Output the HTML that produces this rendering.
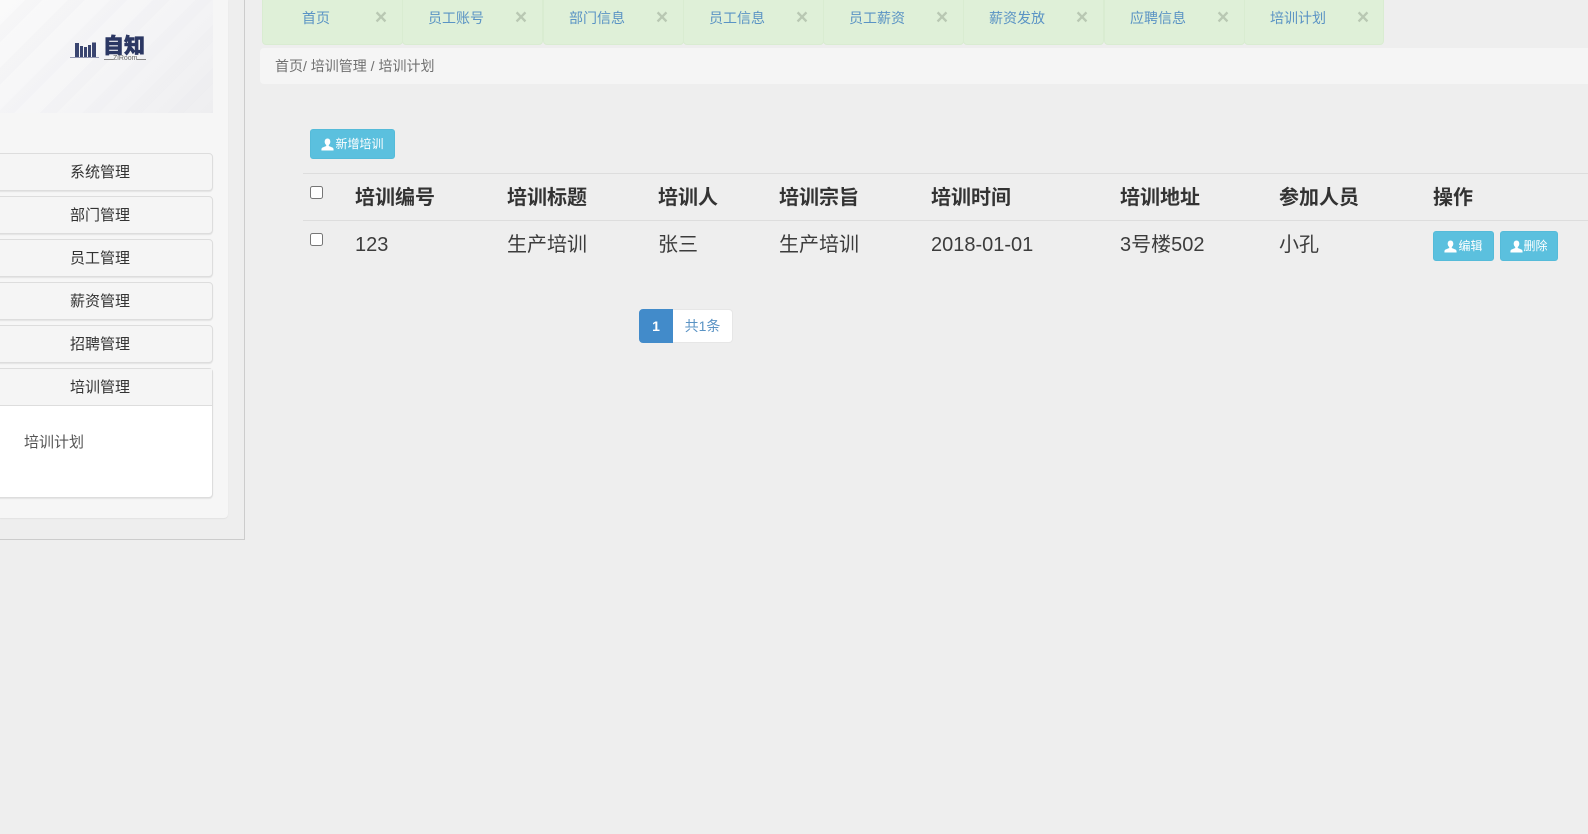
<!DOCTYPE html>
<html lang="zh">
<head>
<meta charset="utf-8">
<title>培训计划</title>
<style>
*{box-sizing:border-box}
html,body{margin:0;padding:0;width:1588px;height:834px;overflow:hidden;background:#eee;color:#333;font-family:"Liberation Sans","Noto Sans CJK SC",sans-serif;font-size:14px}
.a{position:absolute}
#outer{left:0;top:0;width:245px;height:540px;border-right:1px solid #ccc;border-bottom:1px solid #ccc}
#panel{left:0;top:0;width:228px;height:518px;background:#f6f6f6;border-bottom-right-radius:4px;box-shadow:0 1px 1px rgba(0,0,0,.05)}
#logoimg{left:0;top:0;width:213px;height:113px;background:repeating-linear-gradient(135deg,rgba(228,228,234,0) 0,rgba(228,228,234,0) 18px,rgba(228,228,234,.16) 18px,rgba(228,228,234,.16) 30px),linear-gradient(135deg,#fafafa 0%,#f4f4f6 60%,#eeeef0 100%)}
.m{left:-5px;width:218px;height:38px;background:#f5f5f5;border:1px solid #ddd;border-radius:4px;box-shadow:0 1px 1px rgba(0,0,0,.08);text-align:center;font-size:15px;line-height:37px;padding-right:8px}
.tab{top:-6px;width:141px;height:51px;background:#dff0d8;border:1px solid #d9ecd1;border-radius:4px}
.tab span{position:absolute;left:-.5px;width:107px;top:5px;text-align:center;color:#5a93c4;line-height:36px;white-space:nowrap}
.tab b{position:absolute;left:108px;top:6px;width:20px;text-align:center;font-size:21px;line-height:34px;color:#b9c8b3;font-weight:bold;font-family:"Liberation Sans",sans-serif}
#crumb{left:260px;top:48px;width:1328px;height:36px;background:#f5f5f5;border-radius:4px 0 0 4px;padding-left:15px;line-height:37px;color:#707070;white-space:nowrap}
.btn{background:#5bc0de;border:1px solid #55bbd9;border-radius:3px;color:#fff;font-size:12px;height:30px;line-height:28px;white-space:nowrap;display:flex;align-items:center;justify-content:center}
.btn svg{width:13px;height:13px;margin-right:1px;flex:none}
.line{left:303px;width:1285px;height:1px;background:#ddd}
.th,.td{white-space:nowrap;font-size:20px;line-height:30px;color:#333}
.th{top:183px;font-weight:bold}
.td{top:230px;color:#3c3c3c}
.cb{width:13px;height:13px;left:310px;background:#fff;border:1px solid #767676;border-radius:2.5px}
</style>
</head>
<body>
<div class="a" id="outer"></div>
<div class="a" id="panel"></div>
<div class="a" id="logoimg">
<svg class="a" style="left:70px;top:40px" width="30" height="18" viewBox="0 0 30 18">
<path d="M0 17.300H29" stroke="#59618a" stroke-width="0.6" fill="none"/>
<path d="M5 3h4v14H5zM10 6h3v11h-3zM14 7h3v10h-3zM18 5h3v12h-3zM22 2.500h4V17h-4z" fill="#3a4570"/>
</svg>
<div class="a" style="left:103px;top:35px;font-size:21px;line-height:24px;font-weight:900;color:#2b3763;white-space:nowrap;-webkit-text-stroke:.6px #2b3763">自知</div>
<div class="a" style="left:104px;top:59px;width:9px;height:1px;background:#888"></div>
<div class="a" style="left:137px;top:59px;width:9px;height:1px;background:#888"></div>
<div class="a" style="left:113px;top:55px;width:24px;text-align:center;font-size:7px;line-height:8px;color:#666">ZiRoom</div>
</div>
<div class="a m" style="top:153px">系统管理</div>
<div class="a m" style="top:196px">部门管理</div>
<div class="a m" style="top:239px">员工管理</div>
<div class="a m" style="top:282px">薪资管理</div>
<div class="a m" style="top:325px">招聘管理</div>
<div class="a m" style="top:368px;height:130px;background:#fff;padding:0">
<div style="height:37px;background:#f5f5f5;border-bottom:1px solid #ddd;padding-right:8px;line-height:37px">培训管理</div>
<div class="a" style="left:28px;top:59px;line-height:30px;font-size:15px;color:#555">培训计划</div>
</div>

<div class="a tab" style="left:262px"><span>首页</span><b>×</b></div>
<div class="a tab" style="left:402px"><span>员工账号</span><b>×</b></div>
<div class="a tab" style="left:543px"><span>部门信息</span><b>×</b></div>
<div class="a tab" style="left:683px"><span>员工信息</span><b>×</b></div>
<div class="a tab" style="left:823px"><span>员工薪资</span><b>×</b></div>
<div class="a tab" style="left:963px"><span>薪资发放</span><b>×</b></div>
<div class="a tab" style="left:1104px"><span>应聘信息</span><b>×</b></div>
<div class="a tab" style="left:1244px;width:140px"><span>培训计划</span><b>×</b></div>

<div class="a" id="crumb">首页/ 培训管理 / 培训计划</div>

<div class="a btn" style="left:310px;top:129px;width:85px">
<svg viewBox="0 0 12 12"><path d="M6 .5C4.400.5 3.400 1.800 3.400 3.500c0 1.300.6 2.400 1.400 3v.9L1.500 8.800C.8 9.100.4 9.700.4 10.500v1h11.200v-1c0-.8-.4-1.400-1.100-1.700L7.200 7.400v-.9c.8-.6 1.400-1.700 1.400-3C8.600 1.800 7.600.5 6 .5z" fill="#fff"/></svg>新增培训</div>

<div class="a line" style="top:173px"></div>
<div class="a line" style="top:220px"></div>
<div class="a cb" style="top:186px"></div>
<div class="a cb" style="top:233px"></div>

<div class="a th" style="left:355px">培训编号</div>
<div class="a th" style="left:507px">培训标题</div>
<div class="a th" style="left:658px">培训人</div>
<div class="a th" style="left:779px">培训宗旨</div>
<div class="a th" style="left:931px">培训时间</div>
<div class="a th" style="left:1120px">培训地址</div>
<div class="a th" style="left:1279px">参加人员</div>
<div class="a th" style="left:1433px">操作</div>

<div class="a td" style="left:355px">123</div>
<div class="a td" style="left:507px">生产培训</div>
<div class="a td" style="left:658px">张三</div>
<div class="a td" style="left:779px">生产培训</div>
<div class="a td" style="left:931px">2018-01-01</div>
<div class="a td" style="left:1120px">3号楼502</div>
<div class="a td" style="left:1279px">小孔</div>

<div class="a btn" style="left:1433px;top:231px;width:61px">
<svg viewBox="0 0 12 12"><path d="M6 .5C4.400.5 3.400 1.800 3.400 3.500c0 1.300.6 2.400 1.400 3v.9L1.500 8.800C.8 9.100.4 9.700.4 10.500v1h11.200v-1c0-.8-.4-1.400-1.100-1.700L7.200 7.400v-.9c.8-.6 1.400-1.700 1.400-3C8.600 1.800 7.600.5 6 .5z" fill="#fff"/></svg>编辑</div>
<div class="a btn" style="left:1500px;top:231px;width:58px">
<svg style="margin-right:0" viewBox="0 0 12 12"><path d="M6 .5C4.400.5 3.400 1.800 3.400 3.500c0 1.300.6 2.400 1.400 3v.9L1.500 8.800C.8 9.100.4 9.700.4 10.500v1h11.200v-1c0-.8-.4-1.400-1.100-1.700L7.200 7.400v-.9c.8-.6 1.400-1.700 1.400-3C8.600 1.800 7.600.5 6 .5z" fill="#fff"/></svg>删除</div>

<div class="a" style="left:639px;top:309px;width:34px;height:34px;background:#428bca;border:1px solid #428bca;border-radius:4px 0 0 4px;color:#fff;font-weight:bold;text-align:center;line-height:32px">1</div>
<div class="a" style="left:673px;top:309px;width:60px;height:34px;background:#fff;border:1px solid #e6e6e6;border-left:0;border-radius:0 4px 4px 0;color:#5a93c4;text-align:center;line-height:32px;white-space:nowrap">共1条</div>
</body>
</html>
